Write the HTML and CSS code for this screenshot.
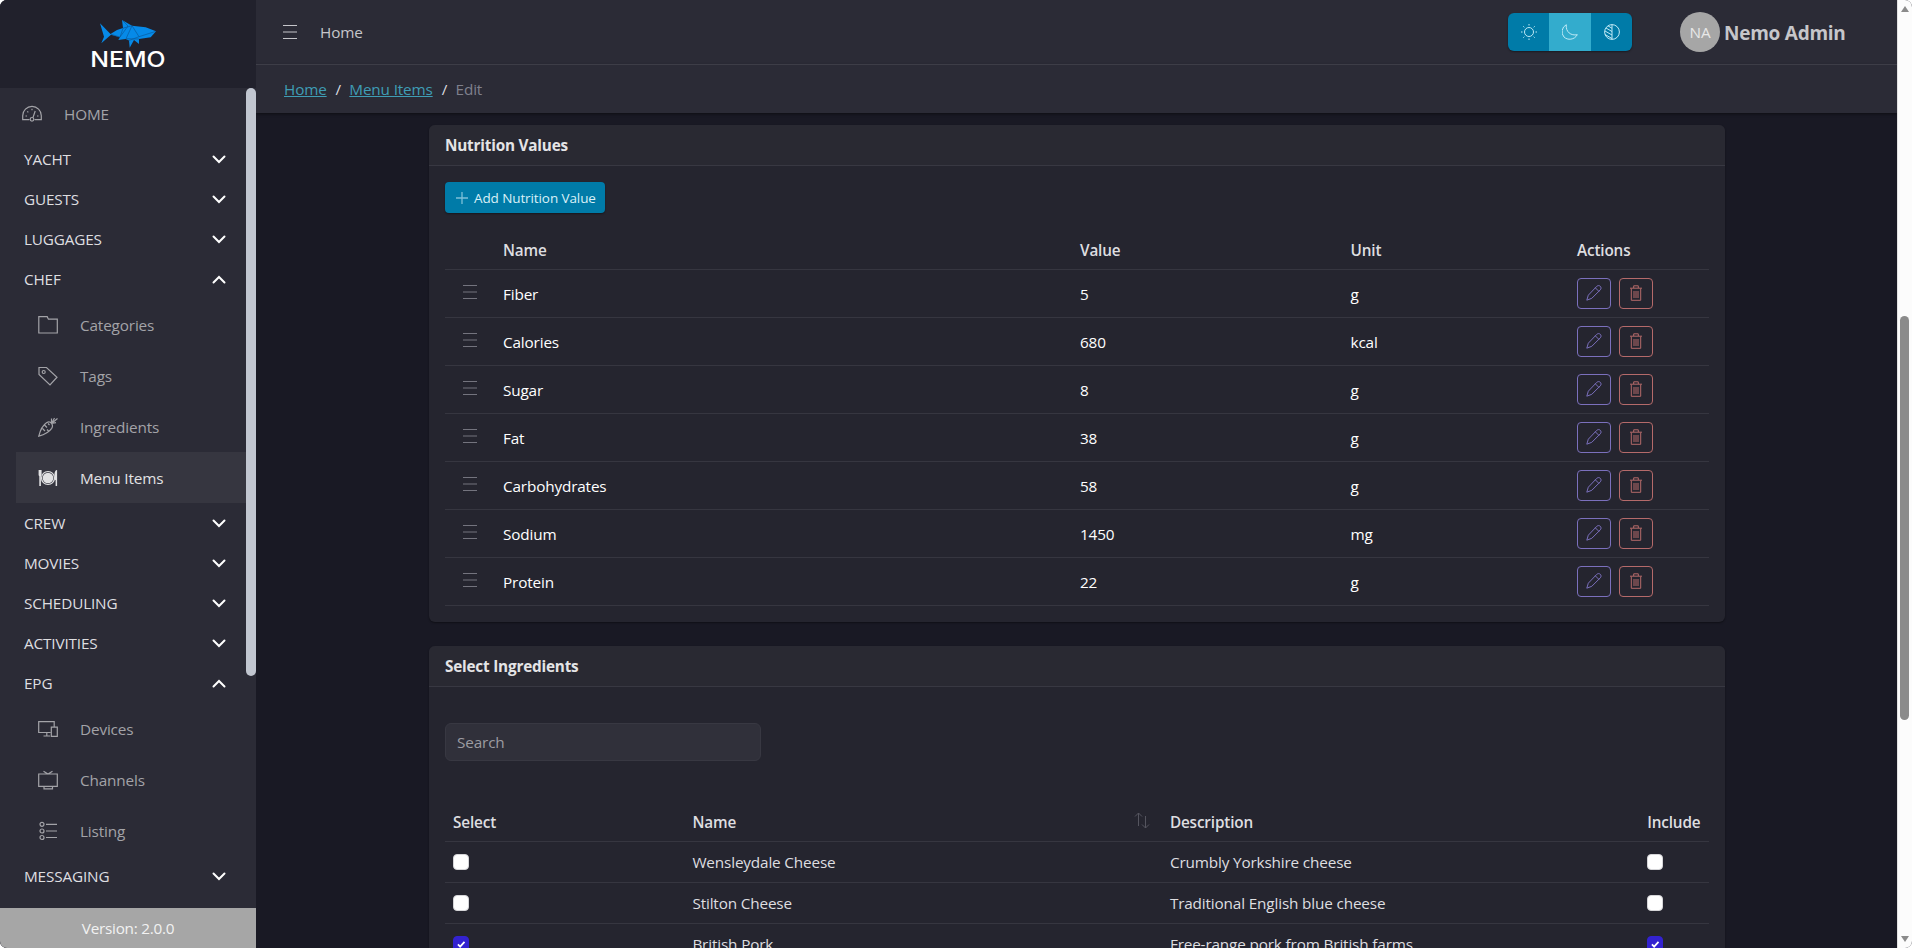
FILE: index.html
```html
<!DOCTYPE html>
<html lang="en">

	<head>
		<meta charset="utf-8">
		<title>Nemo - Menu Items</title>
		<link rel="stylesheet" href="styles.css">
	</head>

	<body>
		<!-- icons -->
		<svg class="sprite">
			<symbol id="i-menu" viewBox="0 0 14 14"><path d="M0 .5h14M0 7h14M0 13.5h14"/></symbol>
			<symbol id="i-down" viewBox="0 0 14 9"><path d="M1.5 1.5L7 7l5.500-5.500"/></symbol>
			<symbol id="i-up" viewBox="0 0 14 9"><path d="M1.500 7.500L7 2l5.500 5.500"/></symbol>
			<symbol id="i-gauge" viewBox="0 0 20 20"><path d="M7.500 15.700H.7v-4a9.300 9.300 0 0 1 18.600 0v4h-6.800M11 13.500l2.200-6.500"/><circle cx="10" cy="15.300" r="1.800"/><path d="M3.500 12h1.500M15 12h1.500M5.300 7.300l1 1M10 4.800v1.500"/></symbol>
			<symbol id="i-folder" viewBox="0 0 20 20"><path d="M.8 1.700h8.400l1.200 2.500h8.900V18H.8z"/></symbol>
			<symbol id="i-tag" viewBox="0 0 20 20"><path d="M1 1.500h7.500L19 11.200l-7 7.800L1 8.500z"/><circle cx="5.700" cy="6" r="1.500"/></symbol>
			<symbol id="i-carrot" viewBox="0 0 20 20"><path d="M.8 19.200C2 14 5 8 8.500 5.700c2-1.200 4-.7 5 .6s1.500 3 .2 5C11.500 14.500 6 17.700 .8 19.200zM13.500 6.500V1.500M13.500 6.500l3-5.500M13.500 6.500l6-5M13.500 6.500l4.500-.8M6.500 8l2.500 2.500M10 6.500l1.500 1.500M4.500 11.500l2.500 2.500M10.500 14l-1.500-1.500"/></symbol>
			<symbol id="i-plate" viewBox="0 0 20 20"><g class="solid"><circle cx="10" cy="10" r="5.300"/><path d="M.6 2h3v5.200l-.7 1V18H1.300V8.200l-.7-1zM19.100 2v16h-1.500v-6h-1.200V7c0-3 1-5 2.700-5z"/></g><circle cx="10" cy="10" r="6.500"/></symbol>
			<symbol id="i-devices" viewBox="0 0 20 20"><path d="M12.500 13.500H.7V2.700h15.500v5M5.500 17h6.500M8.800 13.500V17M13.300 8.200h6v9.100h-6z"/></symbol>
			<symbol id="i-tv" viewBox="0 0 20 20"><path d="M.7 4h18.600v12.300H.7zM5.500 1.200L10 4l4.500-2.800M6 16.500v2.300h8.500v-2.300"/></symbol>
			<symbol id="i-list" viewBox="0 0 20 20"><circle cx="4" cy="3.300" r="2"/><circle cx="4" cy="10" r="2"/><circle cx="4" cy="16.500" r="2"/><path d="M8 3.300h11M8 10h11M8 16.500h11"/></symbol>
			<symbol id="i-sun" viewBox="0 0 16 16"><circle cx="8" cy="8" r="4.500"/><path d="M8 0v1.500M8 14.500V16M0 8h1.500M14.500 8H16M2.300 2.300l1 1M12.700 12.700l1 1M2.300 13.700l1-1M12.700 3.300l1-1"/></symbol>
			<symbol id="i-moon" viewBox="0 0 16 16"><path d="M4.300.7A8 8 0 0 0 2 13c3.500 3.500 10.500 3 13.300-2.300C9 12 3.500 8 4.300.7z"/></symbol>
			<symbol id="i-contrast" viewBox="0 0 16 16"><circle cx="8" cy="8" r="7.400"/><path d="M8 .6v14.800M4 1.800l4 2.500M2 4l6 3.500M1 7l7 4M1 10.500l7 4"/></symbol>
			<symbol id="i-plus" viewBox="0 0 12 12"><path d="M6 0v12M0 6h12"/></symbol>
			<symbol id="i-pen" viewBox="0 0 16 16"><path d="M.8 15.200l1.500-5L10.800 1.300c1.200-1 2.500-.9 3.500 0 1 1.100 1 2.400 0 3.500L5.800 13.300zM9.300 2.800l3.700 3.700"/></symbol>
			<symbol id="i-trash" viewBox="0 0 14 16"><path d="M1 3.200h12M4.700 3V.8h4.600V3M2.300 3.500v11.800h9.400V3.500M5 6v7M7 6v7M9 6v7"/></symbol>
			<symbol id="i-sort" viewBox="0 0 16 17"><path d="M4.500 14V1M1 4.500L4.500 1 8 4.500M11.500 4v12M8 12.500l3.500 3.500 3.500-3.500"/></symbol>
		</svg>

		<div class="sidebar">
			<div class="brand">
				<svg class="shark" viewBox="0 0 56 28">
					<path class="fish" d="M0 3.300L10.500 14l6.500-4 6-2-1-8 10 5.700 13.700 1.600 10.300 4-5.300 6L39 19v5l-5-4-4.300 7.700-.7-7.200-3.300-1.500-7.400 1 1.700-2.700-9-2.600-9.700 8.600L4 16.700z"/>
					<path class="facet" d="M11 14.200l9 3 3-9M22 0l6 6-8 11M32 5.700l-6 13 13 .3M32 5.700l7 11 17-5.400M32 5.700l-9 2.500M29 20.500l10-3.800"/>
				</svg>
				<div class="wordmark">NEMO</div>
			</div>
			<div class="nav">
				<a class="nav-item top"><svg><use href="#i-gauge"/></svg><span>HOME</span></a>
				<div class="nav-group"><span>YACHT</span><svg><use href="#i-down"/></svg></div>
				<div class="nav-group"><span>GUESTS</span><svg><use href="#i-down"/></svg></div>
				<div class="nav-group"><span>LUGGAGES</span><svg><use href="#i-down"/></svg></div>
				<div class="nav-group"><span>CHEF</span><svg><use href="#i-up"/></svg></div>
				<a class="nav-item"><svg><use href="#i-folder"/></svg><span>Categories</span></a>
				<a class="nav-item"><svg><use href="#i-tag"/></svg><span>Tags</span></a>
				<a class="nav-item"><svg><use href="#i-carrot"/></svg><span>Ingredients</span></a>
				<a class="nav-item active"><svg><use href="#i-plate"/></svg><span>Menu Items</span></a>
				<div class="nav-group"><span>CREW</span><svg><use href="#i-down"/></svg></div>
				<div class="nav-group"><span>MOVIES</span><svg><use href="#i-down"/></svg></div>
				<div class="nav-group"><span>SCHEDULING</span><svg><use href="#i-down"/></svg></div>
				<div class="nav-group"><span>ACTIVITIES</span><svg><use href="#i-down"/></svg></div>
				<div class="nav-group"><span>EPG</span><svg><use href="#i-up"/></svg></div>
				<a class="nav-item"><svg><use href="#i-devices"/></svg><span>Devices</span></a>
				<a class="nav-item"><svg><use href="#i-tv"/></svg><span>Channels</span></a>
				<a class="nav-item"><svg><use href="#i-list"/></svg><span>Listing</span></a>
				<div class="nav-group"><span>MESSAGING</span><svg><use href="#i-down"/></svg></div>
				<div class="nav-thumb"></div>
			</div>
			<div class="version">Version: 2.0.0</div>
		</div>

		<div class="main">
			<div class="header">
				<svg class="toggler"><use href="#i-menu"/></svg>
				<a class="header-link">Home</a>
				<div class="themes">
					<button><svg><use href="#i-sun"/></svg></button>
					<button class="on"><svg><use href="#i-moon"/></svg></button>
					<button><svg><use href="#i-contrast"/></svg></button>
				</div>
				<div class="avatar">NA</div>
				<div class="user">Nemo Admin</div>
			</div>
			<div class="breadcrumb">
				<a>Home</a><i>/</i><a class="wide">Menu Items</a><i>/</i><span>Edit</span>
			</div>

			<div class="content">
				<div class="card">
					<div class="card-header">Nutrition Values</div>
					<div class="card-body">
						<button class="add"><svg><use href="#i-plus"/></svg><span>Add Nutrition Value</span></button>
						<table class="nutrition">
							<colgroup><col class="n1"><col class="n2"><col class="n3"><col class="n4"><col class="n5"></colgroup>
							<thead>
								<tr><th></th><th>Name</th><th>Value</th><th>Unit</th><th>Actions</th></tr>
							</thead>
							<tbody>
								<tr><td class="drag"><svg><use href="#i-menu"/></svg></td><td>Fiber</td><td>5</td><td>g</td><td><div class="actions"><button class="edit"><svg><use href="#i-pen"/></svg></button><button class="del"><svg><use href="#i-trash"/></svg></button></div></td></tr>
								<tr><td class="drag"><svg><use href="#i-menu"/></svg></td><td>Calories</td><td>680</td><td>kcal</td><td><div class="actions"><button class="edit"><svg><use href="#i-pen"/></svg></button><button class="del"><svg><use href="#i-trash"/></svg></button></div></td></tr>
								<tr><td class="drag"><svg><use href="#i-menu"/></svg></td><td>Sugar</td><td>8</td><td>g</td><td><div class="actions"><button class="edit"><svg><use href="#i-pen"/></svg></button><button class="del"><svg><use href="#i-trash"/></svg></button></div></td></tr>
								<tr><td class="drag"><svg><use href="#i-menu"/></svg></td><td>Fat</td><td>38</td><td>g</td><td><div class="actions"><button class="edit"><svg><use href="#i-pen"/></svg></button><button class="del"><svg><use href="#i-trash"/></svg></button></div></td></tr>
								<tr><td class="drag"><svg><use href="#i-menu"/></svg></td><td>Carbohydrates</td><td>58</td><td>g</td><td><div class="actions"><button class="edit"><svg><use href="#i-pen"/></svg></button><button class="del"><svg><use href="#i-trash"/></svg></button></div></td></tr>
								<tr><td class="drag"><svg><use href="#i-menu"/></svg></td><td>Sodium</td><td>1450</td><td>mg</td><td><div class="actions"><button class="edit"><svg><use href="#i-pen"/></svg></button><button class="del"><svg><use href="#i-trash"/></svg></button></div></td></tr>
								<tr><td class="drag"><svg><use href="#i-menu"/></svg></td><td>Protein</td><td>22</td><td>g</td><td><div class="actions"><button class="edit"><svg><use href="#i-pen"/></svg></button><button class="del"><svg><use href="#i-trash"/></svg></button></div></td></tr>
							</tbody>
						</table>
					</div>
				</div>

				<div class="card">
					<div class="card-header">Select Ingredients</div>
					<div class="card-body tall">
						<input class="search" type="text" placeholder="Search">
						<table class="ingredients">
							<colgroup><col class="g1"><col class="g2"><col class="g3"><col class="g4"></colgroup>
							<thead>
								<tr><th>Select</th><th><div class="sortable">Name<svg><use href="#i-sort"/></svg></div></th><th>Description</th><th>Include</th></tr>
							</thead>
							<tbody>
								<tr><td><div class="check"></div></td><td>Wensleydale Cheese</td><td>Crumbly Yorkshire cheese</td><td><div class="check"></div></td></tr>
								<tr><td><div class="check"></div></td><td>Stilton Cheese</td><td>Traditional English blue cheese</td><td><div class="check"></div></td></tr>
								<tr><td><div class="check checked"><svg viewBox="0 0 16 16"><path d="M4.500 8.500l2.500 2.500 5-5.500"/></svg></div></td><td>British Pork</td><td>Free-range pork from British farms</td><td><div class="check checked"><svg viewBox="0 0 16 16"><path d="M4.500 8.500l2.500 2.500 5-5.500"/></svg></div></td></tr>
							</tbody>
						</table>
					</div>
				</div>
			</div>
		</div>

		<div class="page-scroll">
			<div class="arrow up"></div>
			<div class="thumb"></div>
			<div class="arrow down"></div>
		</div>
	</body>

</html>
```
FILE: styles.css
```css
* {
	box-sizing: border-box;
	margin: 0;
	padding: 0;
}
html {
	background: #fff;
}
body {
	display: flex;
	width: 1912px;
	height: 948px;
	overflow: hidden;
	border-radius: 7px;
	background: #191924;
	color: #dedee0;
	font-family: "Open Sans", sans-serif;
	font-size: 15.3px;
	letter-spacing: -0.150px;
	line-height: 24px;
}
svg {
	display: block;
	flex: none;
	fill: none;
	stroke: currentColor;
}
button {
	font: inherit;
	letter-spacing: inherit;
	border: 0;
}
.sprite {
	display: none;
}
.solid {
	fill: currentColor;
	stroke: none;
}

/* sidebar */
.sidebar {
	display: flex;
	flex-direction: column;
	flex: none;
	width: 256px;
	background: #2b2b36;
}
.brand {
	display: flex;
	flex-direction: column;
	align-items: center;
	height: 88px;
	padding-top: 20px;
	background: #21212c;
}
.shark {
	width: 56px;
	height: 28px;
}
.fish {
	fill: #068ae8;
	stroke: none;
}
.facet {
	stroke: #0a5a9e;
	stroke-width: .7;
}
.wordmark {
	color: #fff;
	font-family: Inter, sans-serif;
	font-size: 21px;
	font-weight: 500;
	line-height: 24px;
	letter-spacing: 0;
	transform: scaleX(1.18);
}
.nav {
	position: relative;
	flex: 1;
	overflow: hidden;
}
.nav-item {
	display: flex;
	align-items: center;
	gap: 22px;
	height: 51px;
	margin: 0 10px 0 16px;
	padding-left: 22px;
	color: #a3a3a8;
}
.nav-item svg {
	width: 20px;
	height: 20px;
	stroke-width: 1.200;
}
.nav-item.top {
	padding-left: 6px;
}
.nav-item.active {
	background: #363640;
	color: #e2e2e4;
}
.nav-group {
	display: flex;
	align-items: center;
	justify-content: space-between;
	height: 40px;
	padding: 0 30px 0 24px;
	color: #dedee0;
}
.nav-group svg {
	width: 14px;
	height: 9px;
	stroke: #fff;
	stroke-width: 2;
	stroke-linecap: round;
}
.nav-thumb {
	position: absolute;
	top: 0;
	right: 0;
	width: 10px;
	height: 588px;
	border-radius: 5px;
	background: #c1c6d0;
}
.version {
	height: 40px;
	background: #a6a6a6;
	color: #f2f2f2;
	letter-spacing: -0.250px;
	line-height: 41px;
	text-align: center;
}

/* header */
.main {
	display: flex;
	flex-direction: column;
	flex: 1;
	overflow: hidden;
}
.header {
	display: flex;
	align-items: center;
	flex: none;
	height: 65px;
	padding-left: 27px;
	border-bottom: 1px solid #43434e;
	background: #2b2b36;
	color: #c6c6ca;
}
.toggler {
	width: 14px;
	height: 14px;
}
.header-link {
	margin-left: 23px;
}
.themes {
	display: flex;
	margin-left: auto;
	overflow: hidden;
	border-radius: 6px;
	background: #007ba8;
	box-shadow: 0 1px 2px rgba(0, 0, 0, .4);
	color: #bfe9f5;
}
.themes button {
	display: flex;
	align-items: center;
	justify-content: center;
	width: 41px;
	height: 38px;
	background: none;
	color: inherit;
}
.themes .on {
	width: 42px;
	background: #33accd;
}
.themes svg {
	width: 16px;
	height: 16px;
}
.avatar {
	width: 40px;
	height: 40px;
	margin-left: 48px;
	border-radius: 50%;
	background: #a6a6a6;
	color: #e8e8e8;
	line-height: 41px;
	text-align: center;
}
.user {
	width: 177px;
	padding: 2px 0 0 4px;
	font-size: 19px;
	font-weight: 700;
	letter-spacing: -0.250px;
}
.breadcrumb {
	position: relative;
	display: flex;
	flex: none;
	height: 48px;
	padding: 12px 28px 0;
	background: #2b2b36;
	box-shadow: 0 1px 3px rgba(0, 0, 0, .5);
}
.breadcrumb a {
	width: 43px;
	color: #3f9db5;
	text-decoration: underline;
}
.breadcrumb .wide {
	width: 84px;
}
.breadcrumb i {
	width: 22.300px;
	font-style: normal;
	text-align: center;
}
.breadcrumb span {
	color: #7f808c;
}

/* cards */
.content {
	flex: 1;
	overflow: hidden;
	padding: 12px 172px 0 173px;
}
.card {
	margin-bottom: 24px;
	border-radius: 6px;
	background: #25252f;
	box-shadow: 0 1px 2px rgba(0, 0, 0, .4);
}
.card-header {
	height: 41px;
	padding: 8px 16px 0;
	border-bottom: 1px solid #383842;
	border-radius: 6px 6px 0 0;
	background: #292932;
	color: #e4e4e6;
	font-weight: 700;
	letter-spacing: -0.200px;
}
.card-body {
	padding: 16px;
}
.card-body.tall {
	padding-top: 36px;
}
.add {
	display: flex;
	align-items: center;
	gap: 6px;
	width: 160px;
	height: 31px;
	padding-left: 11px;
	border-radius: 4px;
	background: #007ba8;
	box-shadow: 0 1px 2px rgba(0, 0, 0, .4);
	color: #d9f0f7;
	font-size: 13.500px;
	letter-spacing: -0.100px;
	white-space: nowrap;
}
.add svg {
	width: 12px;
	height: 12px;
	stroke-width: 1.300;
	color: #7cc0d8;
}
table {
	width: 1264px;
	border-collapse: separate;
	border-spacing: 0;
	table-layout: fixed;
}
th {
	height: 41px;
	padding: 1px 8px 0;
	border-bottom: 1px solid #363640;
	font-weight: 600;
	text-align: left;
	white-space: nowrap;
}
td {
	height: 48px;
	padding: 0 8px;
	border-bottom: 1px solid #363640;
	vertical-align: middle;
}
.nutrition {
	margin-top: 16px;
}
.nutrition td {
	color: #fff;
}
.n1 { width: 50px; }
.n2 { width: 577px; }
.n3 { width: 270.500px; }
.n4 { width: 226.500px; }
.n5 { width: 140px; }
.nutrition .drag {
	padding: 0 0 3px 18px;
	color: #74747e;
}
.drag svg {
	width: 14px;
	height: 14px;
}
.actions {
	display: flex;
	gap: 8px;
}
.actions button {
	display: flex;
	align-items: center;
	justify-content: center;
	width: 34px;
	height: 31px;
	padding-bottom: 2px;
	border: 1px solid;
	border-radius: 4px;
	background: none;
}
.actions .edit {
	color: #7b70bd;
}
.actions .del {
	color: #b56a6a;
}
.actions svg {
	width: 16px;
	height: 16px;
}
.search {
	display: block;
	width: 316px;
	height: 38px;
	padding: 0 11px 1px;
	border: 1px solid #383842;
	border-radius: 6px;
	background: #30303a;
	color: #dedee0;
	font: inherit;
	letter-spacing: inherit;
}
.search::placeholder {
	color: #9c9ca2;
}
.ingredients {
	margin-top: 40px;
}
.ingredients td {
	height: 41px;
	padding-bottom: 1px;
}
.g1 { width: 239.400px; }
.g2 { width: 477.500px; }
.g3 { width: 477.300px; }
.g4 { width: 69.800px; }
.sortable {
	display: flex;
	align-items: center;
	justify-content: space-between;
	padding-right: 4px;
}
.sortable svg {
	width: 16px;
	height: 17px;
	margin-top: -3px;
	color: #55555f;
}
.check {
	width: 16px;
	height: 16px;
	border: 1px solid #d5d5d8;
	border-radius: 4px;
	background: #fff;
}
.check.checked {
	border-color: #3322d0;
	background: #3322d0;
}
.check svg {
	width: 14px;
	height: 14px;
	stroke: #fff;
	stroke-width: 2;
}

/* window scrollbar */
.page-scroll {
	display: flex;
	flex-direction: column;
	align-items: center;
	flex: none;
	width: 15px;
	padding: 6px 1px 6px 0;
	border-left: 1px solid #e2e2e2;
	background: #fcfcfc;
}
.arrow {
	border: 4px solid transparent;
}
.arrow.up {
	border-top: 0;
	border-bottom: 6px solid #8b8b8b;
}
.arrow.down {
	margin-top: auto;
	border-bottom: 0;
	border-top: 6px solid #8b8b8b;
}
.thumb {
	width: 9px;
	height: 404px;
	margin-top: 304px;
	border-radius: 5px;
	background: #8b8b8b;
}
```
